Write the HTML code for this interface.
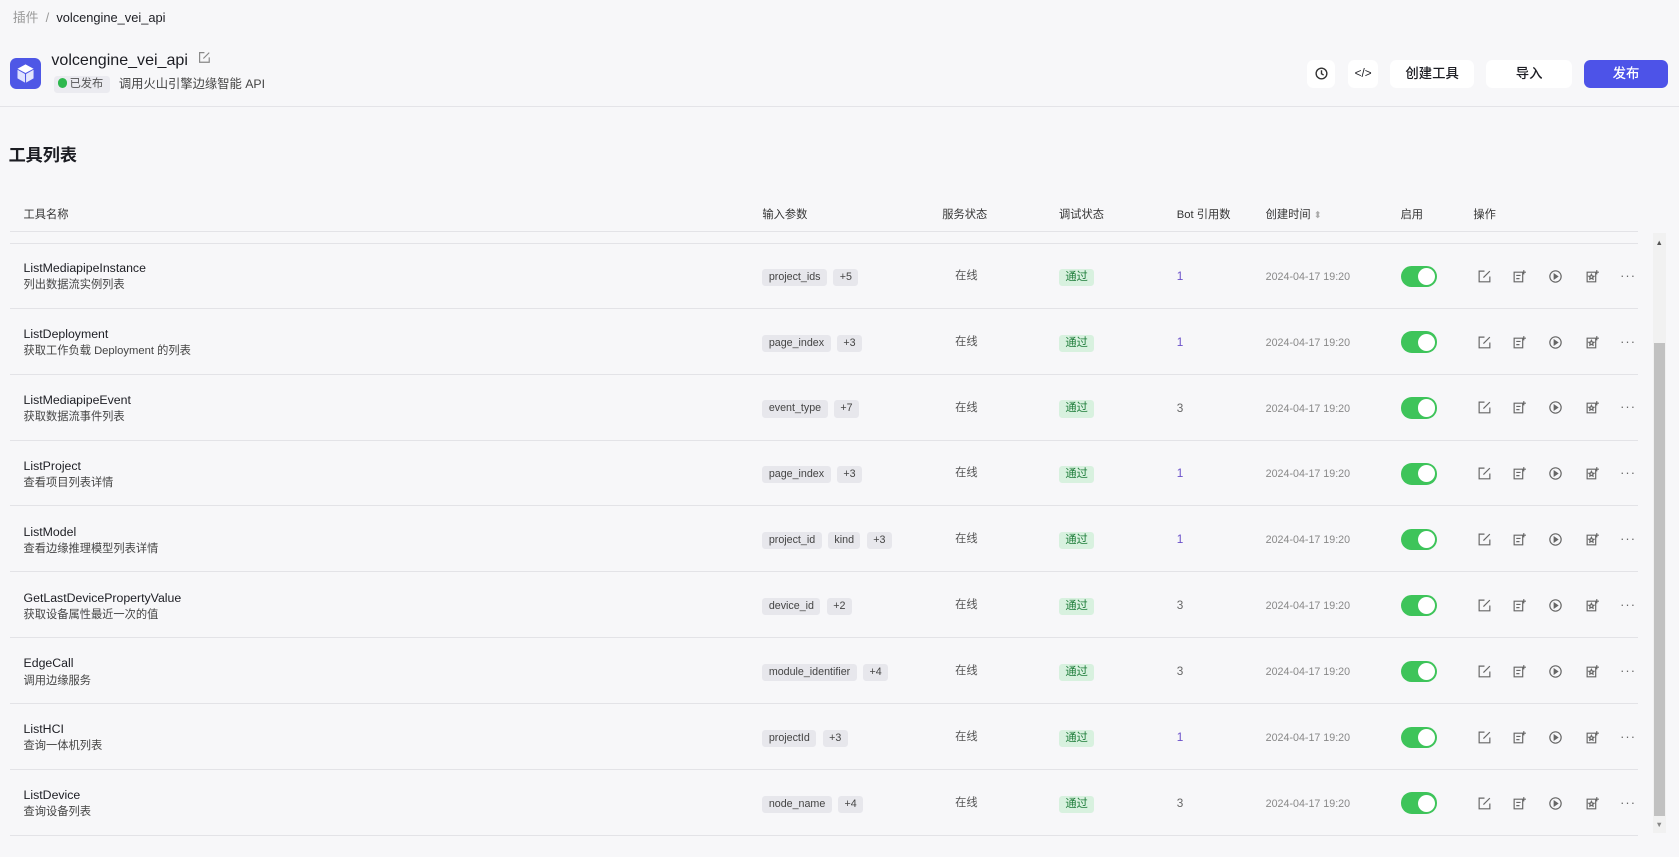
<!DOCTYPE html>
<html><head><meta charset="utf-8">
<style>
html{zoom:1.07079}
*{box-sizing:border-box;margin:0;padding:0}
body{width:1568px;height:800px;background:#f7f7f9;font-family:"Liberation Sans","Noto Sans CJK SC",sans-serif;color:#1c1d23;position:relative;overflow:hidden}
.a{position:absolute;white-space:nowrap;line-height:1.2}
.bc{top:9px;left:12px;font-size:12px;color:#999}
.bc b{font-weight:400;color:#1c1d23}
.logo{left:9px;top:54px;width:29px;height:29px;border-radius:6px;background:#4e57e6}
.title{left:48px;top:48px;font-size:15px;font-weight:500}
.badge{left:50px;top:71px;height:16px;padding:0 6px 0 4px;background:#ebebf0;border-radius:3px;font-size:10.5px;color:#555;line-height:16px}
.badge i{display:inline-block;width:9px;height:9px;border-radius:50%;background:#2eb84e;vertical-align:-1px;margin-right:2px;position:relative}
.desc{left:111px;top:72px;font-size:11.5px;color:#444}
.btn{top:56px;height:26px;background:#fff;border-radius:6px;font-size:12.5px;font-weight:500;text-align:center;line-height:26px}
.hline{left:0;right:0;height:1px;background:#e4e4e8}
h2{position:absolute;left:8px;top:132px;font-size:16px;font-weight:700}
.th{top:195px;font-size:10.5px;color:#333}
.row{position:absolute;left:9px;width:1521px;height:61.5px;border-bottom:1px solid #e3e3e7}
.n{font-size:11.5px;color:#1c1d23}
.d{font-size:10.5px;color:#444}
.tw{line-height:16px;height:16px}
.tag{display:inline-block;vertical-align:top;height:16px;line-height:16px;padding:0 6px;background:#e7e7ec;border-radius:3px;font-size:10px;color:#444;margin-right:6px}
.ok{background:#d8f1df;color:#1e7d3a;font-size:10.5px;padding:0 6px;height:16px;line-height:16px;border-radius:3px}
.tg{width:34px;height:20px;background:#3ec45a;border-radius:10px}
.tg:after{content:"";position:absolute;right:2px;top:2px;width:16px;height:16px;border-radius:50%;background:#fff}
.ic{width:14px;height:14px}
</style></head><body>
<div class="a bc">插件 &nbsp;/&nbsp; <b>volcengine_vei_api</b></div>
<div class="a logo"><svg width="29" height="29" viewBox="0 0 29 29"><path d="M14.5 6 L22 10 L14.5 14 L7 10Z" fill="#fff"/><path d="M7 11 L14 15 L14 23 L7 19Z" fill="#dfe2ff"/><path d="M15 15 L22 11 L22 19 L15 23Z" fill="#fff" opacity=".85"/></svg></div>
<div class="a title">volcengine_vei_api <svg width="12" height="12" viewBox="0 0 12 12" style="margin-left:5px;vertical-align:1px"><path d="M6 1.5H1.5v9h9V6M5 7l5.5-5.5" fill="none" stroke="#888" stroke-width="1.1"/></svg></div>
<div class="a badge"><i></i>已发布</div>
<div class="a desc">调用火山引擎边缘智能 API</div>
<div class="a btn" style="left:1221px;width:26px"><svg width="14" height="14" viewBox="0 0 14 14" style="margin-top:6px"><circle cx="7" cy="7" r="5" fill="none" stroke="#333" stroke-width="1.3"/><path d="M7 4v3.2l2 1.3" fill="none" stroke="#333" stroke-width="1.3"/></svg></div>
<div class="a btn" style="left:1259px;width:28px;font-size:11px;font-weight:400;line-height:26px">&lt;/&gt;</div>
<div class="a btn" style="left:1298px;width:79px;line-height:26px">创建工具</div>
<div class="a btn" style="left:1388px;width:80px;line-height:26px">导入</div>
<div class="a btn" style="left:1479px;width:79px;background:#4d53e8;color:#fff;line-height:26px">发布</div>
<div class="a hline" style="top:99px"></div>
<h2>工具列表</h2>
<div class="a th" style="left:22px">工具名称</div>
<div class="a th" style="left:712px">输入参数</div>
<div class="a th" style="left:880px">服务状态</div>
<div class="a th" style="left:989px">调试状态</div>
<div class="a th" style="left:1099px">Bot 引用数</div>
<div class="a th" style="left:1182px">创建时间 <span style="color:#aaa;font-size:9px">⬍</span></div>
<div class="a th" style="left:1308px">启用</div>
<div class="a th" style="left:1376px">操作</div>
<div class="a" style="left:9px;width:1521px;top:216px;height:1px;background:#e3e3e7"></div>
<div class="a" style="left:9px;width:1521px;top:227px;height:1px;background:#e3e3e7"></div>
<div class="a" style="left:1544px;top:218px;width:12px;height:560px;background:#f1f1f1"></div>
<div class="a" style="left:1545px;top:320px;width:10px;height:442px;background:#c1c1c1"></div>
<div class="a" style="left:1546px;top:222px;font-size:7px;color:#555">▲</div>
<div class="a" style="left:1546px;top:766px;font-size:7px;color:#888">▼</div>
<div id="rows"></div>
<script>
var R=[["ListMediapipeInstance","列出数据流实例列表",["project_ids","+5"],"1"],
["ListDeployment","获取工作负载 Deployment 的列表",["page_index","+3"],"1"],
["ListMediapipeEvent","获取数据流事件列表",["event_type","+7"],"3"],
["ListProject","查看项目列表详情",["page_index","+3"],"1"],
["ListModel","查看边缘推理模型列表详情",["project_id","kind","+3"],"1"],
["GetLastDevicePropertyValue","获取设备属性最近一次的值",["device_id","+2"],"3"],
["EdgeCall","调用边缘服务",["module_identifier","+4"],"3"],
["ListHCI","查询一体机列表",["projectId","+3"],"1"],
["ListDevice","查询设备列表",["node_name","+4"],"3"]];
var icons=['<path d="M7 2H2v10h10V7M6 8l6-6" />','<path d="M2 3h8v9H2zM4 6h4M4 9h3M11 1v4M9 3h4"/>','<circle cx="7" cy="7" r="5.3"/><path d="M5.8 4.8v4.4L9 7z" fill="#666"/>','<path d="M2 3h8v9H2zM6 5l.8 1.6 1.6.2-1.2 1.1.3 1.6L6 8.7 4.5 9.5l.3-1.6L3.6 6.8l1.6-.2zM11 1v4M9 3h4"/>'];
var h="";R.forEach(function(r,i){var t=227+i*61.5;var c=t+31;
h+='<div class="row" style="top:'+t+'px"></div>';
h+='<div class="a n" style="left:22px;top:'+(c-14)+'px">'+r[0]+'</div><div class="a d" style="left:22px;top:'+(c+3)+'px">'+r[1]+'</div>';
h+='<div class="a tw" style="left:712px;top:'+(c-7)+'px">'+r[2].map(function(x){return '<span class="tag">'+x+'</span>'}).join('')+'</div>';
h+='<div class="a" style="left:892px;top:'+(c-6)+'px;font-size:10.5px;color:#555">在线</div>';
h+='<div class="a ok" style="left:989px;top:'+(c-7)+'px">通过</div>';
h+='<div class="a" style="left:1099px;top:'+(c-6)+'px;font-size:11px;color:'+(r[3]=="1"?"#6a4fc9":"#666")+'">'+r[3]+'</div>';
h+='<div class="a" style="left:1182px;top:'+(c-5)+'px;font-size:10px;color:#888">2024-04-17 19:20</div>';
h+='<div class="a tg" style="left:1308px;top:'+(c-10)+'px"></div>';
[1379,1412,1446,1480].forEach(function(x,k){h+='<svg class="a ic" style="left:'+x+'px;top:'+(c-7)+'px" viewBox="0 0 14 14" fill="none" stroke="#666" stroke-width="1.1">'+icons[k]+'</svg>';});
h+='<div class="a" style="left:1513px;top:'+(c-8)+'px;font-size:12px;color:#666;letter-spacing:1px">···</div>';
});document.getElementById("rows").innerHTML=h;
</script>
</body></html>
